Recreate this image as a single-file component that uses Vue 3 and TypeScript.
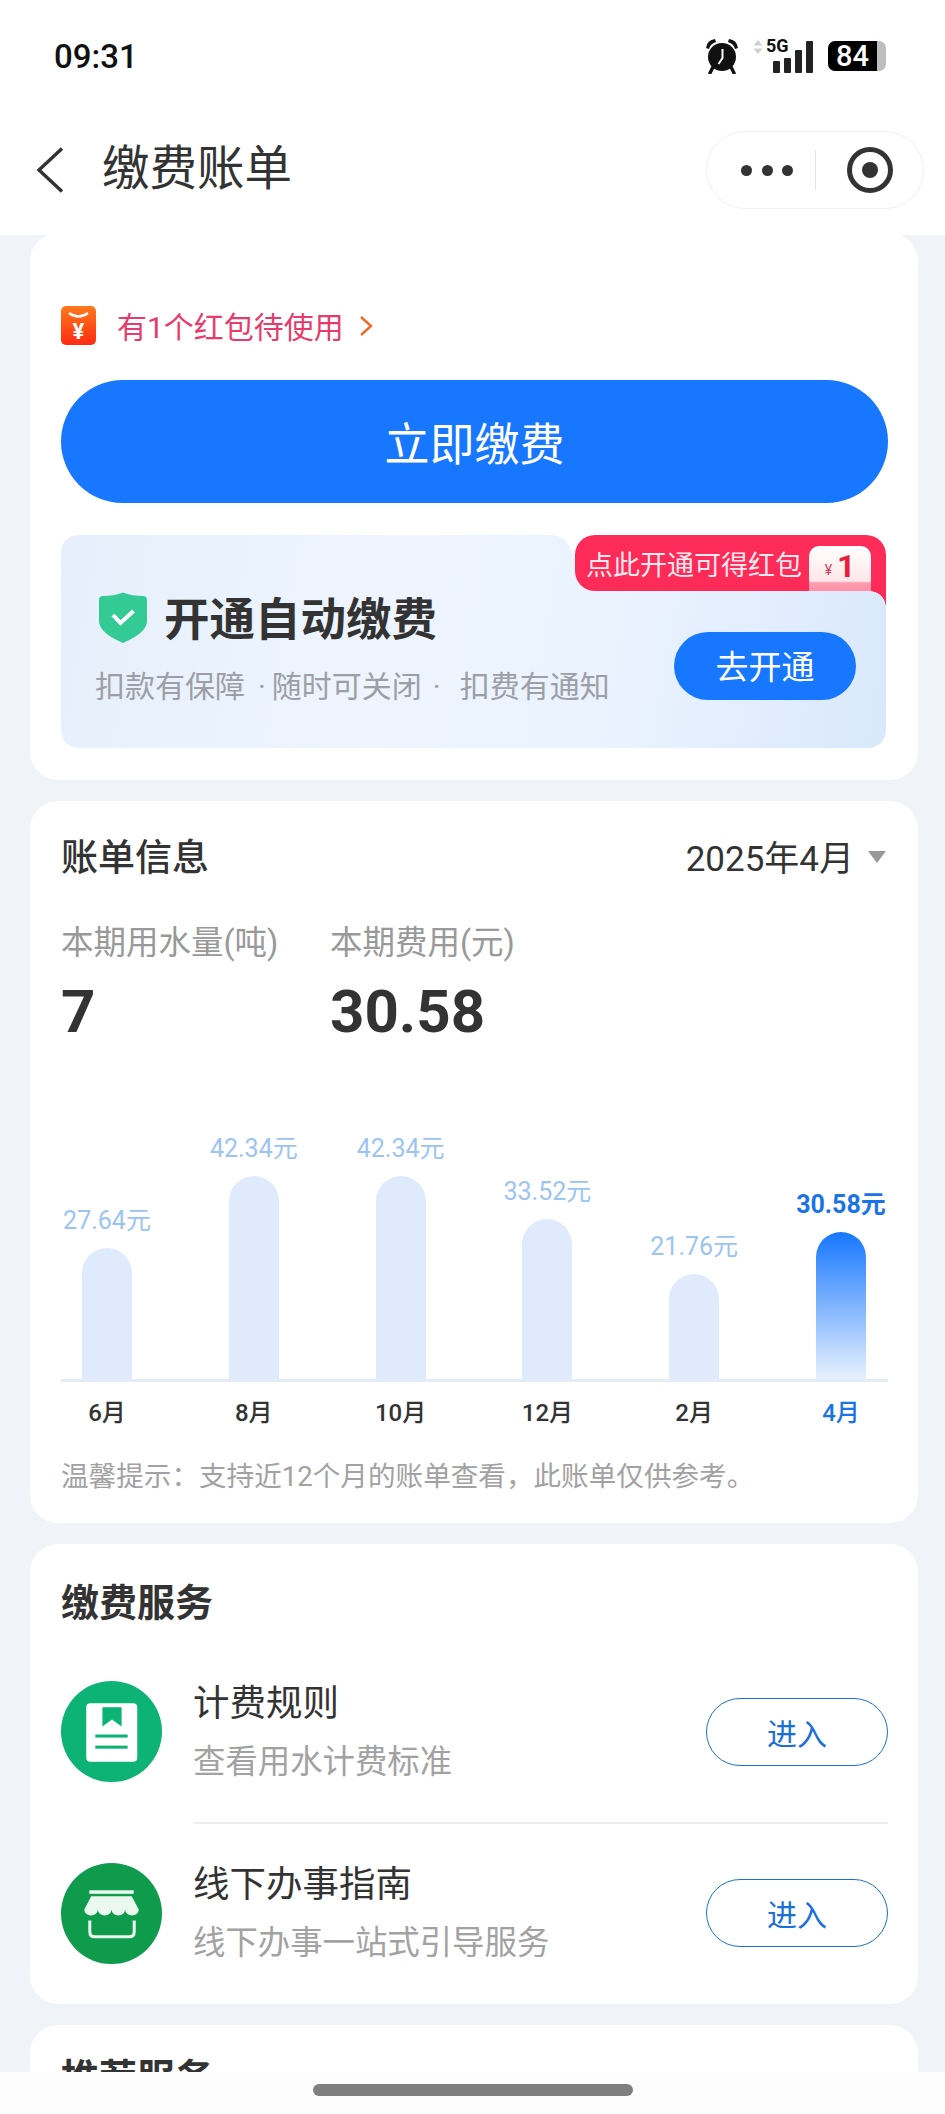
<template>
  <div class="page">
    <header class="top">
      <div class="status">
        <span class="time">09:31</span>
        <div class="status-right">
          <svg class="alarm" width="34" height="36" viewBox="0 0 34 36">
            <path d="M1 10 Q2 2 10 1 L11 4 Q5 6 4 11Z M33 10 Q32 2 24 1 L23 4 Q29 6 30 11Z" fill="#111" />
            <path d="M8 29 L5 35 M26 29 L29 35" stroke="#111" stroke-width="3.4" stroke-linecap="round" />
            <circle cx="17" cy="19" r="14" fill="#111" />
            <path d="M17.5 11 V20 L13.5 26" stroke="#fff" stroke-width="2" fill="none" />
          </svg>
          <div class="signal">
            <svg class="arrows" width="10" height="14" viewBox="0 0 10 14">
              <path d="M5 0 L9.5 5.5 H0.5Z M5 14 L9.5 8.5 H0.5Z" fill="#cfcfcf" />
            </svg>
            <span class="five-g">5G</span>
            <div class="bars">
              <i style="height: 12px"></i>
              <i style="height: 15px"></i>
              <i style="height: 23px"></i>
              <i style="height: 32px"></i>
            </div>
          </div>
          <div class="battery"><span>84</span></div>
        </div>
      </div>
      <div class="nav">
        <svg class="back" width="28" height="46" viewBox="0 0 28 46">
          <path d="M26 1.5 L3 23 L26 44.5" fill="none" stroke="#333" stroke-width="3.4" />
        </svg>
        <h1 class="nav-title">缴费账单</h1>
        <div class="capsule">
          <span class="dots"><i></i><i></i><i></i></span>
          <span class="capsule-line"></span>
          <svg width="48" height="48" viewBox="0 0 48 48">
            <circle cx="24" cy="24" r="20.5" fill="none" stroke="#333" stroke-width="5" />
            <circle cx="24" cy="24" r="8" fill="#333" />
          </svg>
        </div>
      </div>
    </header>

    <main class="content">
      <section class="card pay-card">
        <div class="promo">
          <svg width="35" height="39" viewBox="0 0 35 39">
            <defs>
              <linearGradient id="packet" x1="0" y1="0" x2="0" y2="1">
                <stop offset="0" stop-color="#ff7a1c" />
                <stop offset="1" stop-color="#ff2a12" />
              </linearGradient>
            </defs>
            <rect width="35" height="39" rx="5" fill="url(#packet)" />
            <path d="M8 7 Q17.5 14 27 7" fill="none" stroke="#fff" stroke-width="2.4" />
            <text x="17.5" y="33" text-anchor="middle" font-size="22" font-weight="700" fill="#fff">¥</text>
          </svg>
          <span class="promo-text">有1个红包待使用</span>
          <svg class="promo-arrow" width="14" height="22" viewBox="0 0 14 22">
            <path d="M2 2 L12 11 L2 20" fill="none" stroke="#ee6a2a" stroke-width="2.4" />
          </svg>
        </div>
        <button class="pay-btn">立即缴费</button>
        <div class="auto-wrap">
          <div class="auto-box">
            <div class="auto-left">
              <div class="auto-title">
                <svg width="48" height="51" viewBox="0 0 48 51">
                  <path d="M24 0.5 C30 3 37 4 44 4 Q48 4 48 8 V29 C48 39 35 46 24 51 C13 46 0 39 0 29 V8 Q0 4 4 4 C11 4 18 3 24 0.5Z" fill="#33ca96" />
                  <path d="M14 23 L21.5 31 L34.5 19" fill="none" stroke="#fff" stroke-width="4" />
                </svg>
                <span>开通自动缴费</span>
              </div>
              <p class="auto-sub">扣款有保障<span class="sep-a">·</span>随时可关闭<span class="sep-b">·</span>扣费有通知</p>
            </div>
            <button class="auto-btn">去开通</button>
          </div>
          <div class="auto-tag">
            <span class="tag-text">点此开通可得红包</span>
            <span class="coin"><small>¥</small><b>1</b></span>
          </div>
        </div>
      </section>

      <section class="card bill-card">
        <div class="card-head">
          <h2 class="bill-title">账单信息</h2>
          <div class="month-picker">
            <span>2025年4月</span>
            <i class="caret"></i>
          </div>
        </div>
        <div class="stats">
          <div class="stat water">
            <div class="stat-label">本期用水量(吨)</div>
            <div class="stat-value">7</div>
          </div>
          <div class="stat">
            <div class="stat-label">本期费用(元)</div>
            <div class="stat-value">30.58</div>
          </div>
        </div>
        <div class="chart">
          <div v-for="b in bills" :key="b.month" class="col" :class="{ current: b.current }">
            <span class="amount">{{ b.amount }}元</span>
            <div class="bar" :style="{ height: b.height + 'px' }"></div>
          </div>
        </div>
        <div class="months">
          <span v-for="b in bills" :key="b.month" class="month" :class="{ current: b.current }">{{ b.month }}</span>
        </div>
        <p class="hint">温馨提示：支持近12个月的账单查看，此账单仅供参考。</p>
      </section>

      <section class="card service-card">
        <h2 class="section-title">缴费服务</h2>
        <div class="service">
          <svg class="service-icon" width="101" height="101" viewBox="0 0 100 100">
            <circle cx="50" cy="50" r="50" fill="#0db374" />
            <rect x="25" y="22" width="50.5" height="58" rx="4" fill="#fff" />
            <path d="M41 26 H60 V45 L50.5 38 L41 45Z" fill="#0db374" />
            <rect x="34" y="53" width="32" height="3" fill="#0db374" />
            <rect x="34" y="64" width="32" height="3" fill="#0db374" />
          </svg>
          <div class="service-body line">
            <div class="service-text">
              <div class="service-name">计费规则</div>
              <div class="service-desc">查看用水计费标准</div>
            </div>
            <button class="enter-btn">进入</button>
          </div>
        </div>
        <div class="service">
          <svg class="service-icon" width="101" height="101" viewBox="0 0 100 100">
            <circle cx="50" cy="50" r="50" fill="#0f9b4c" />
            <rect x="28" y="27" width="44" height="3.5" fill="#eaf8ef" />
            <path d="M30 33 H70 L77 46 A6.75 6 0 0 1 63.5 46 A6.75 6 0 0 1 50 46 A6.75 6 0 0 1 36.5 46 A6.75 6 0 0 1 23 46Z" fill="#eaf8ef" />
            <path d="M28.5 57 V68 Q28.5 73 33.5 73 H67.5 Q72.5 73 72.5 68 V57" fill="none" stroke="#eaf8ef" stroke-width="3" />
          </svg>
          <div class="service-body">
            <div class="service-text">
              <div class="service-name">线下办事指南</div>
              <div class="service-desc">线下办事一站式引导服务</div>
            </div>
            <button class="enter-btn">进入</button>
          </div>
        </div>
      </section>

      <section class="card more-card">
        <h2 class="section-title">推荐服务</h2>
      </section>
    </main>

    <div class="home-bar"><i></i></div>
  </div>
</template>

<script setup lang="ts">
interface Bill {
  month: string
  amount: string
  height: number
  current?: boolean
}

const bills: Bill[] = [
  { month: '6月', amount: '27.64', height: 131 },
  { month: '8月', amount: '42.34', height: 203 },
  { month: '10月', amount: '42.34', height: 203 },
  { month: '12月', amount: '33.52', height: 160 },
  { month: '2月', amount: '21.76', height: 105 },
  { month: '4月', amount: '30.58', height: 147, current: true }
]
</script>

<style>
html,
body {
  margin: 0;
  background: #f0f3f8;
}
</style>

<style scoped>
.page {
  position: relative;
  width: 945px;
  height: 2114px;
  overflow: hidden;
  background: #f0f3f8;
  color: #333;
  font-family: Roboto, "Noto Sans CJK SC", sans-serif;
}

button {
  border: none;
  padding: 0;
  font-family: inherit;
}

h1,
h2,
p {
  margin: 0;
  font-weight: 400;
}

.top {
  position: relative;
  z-index: 2;
  height: 235px;
  background: #fff;
}

.status {
  display: flex;
  justify-content: space-between;
  align-items: center;
  height: 112px;
  padding: 0 59px 0 54px;
  box-sizing: border-box;
}

.time {
  font-size: 33px;
  font-weight: 500;
  color: #111;
}

.status-right {
  display: flex;
  align-items: center;
}

.signal {
  position: relative;
  width: 60px;
  height: 34px;
  margin-left: 14px;
}

.arrows {
  position: absolute;
  left: 0;
  top: 1px;
}

.five-g {
  position: absolute;
  left: 13px;
  top: -3px;
  font-size: 18px;
  line-height: 20px;
  font-weight: 700;
  color: #111;
}

.bars {
  position: absolute;
  right: 0;
  bottom: 0;
  display: flex;
  align-items: flex-end;
  gap: 4px;
}

.bars i {
  display: block;
  width: 7px;
  border-radius: 1px;
  background: #222;
}

.battery {
  display: flex;
  align-items: center;
  justify-content: center;
  width: 58px;
  height: 30px;
  margin-left: 15px;
  padding-right: 9px;
  box-sizing: border-box;
  border-radius: 7px;
  background: linear-gradient(to right, #000 85%, #bdbdbd 85%);
  color: #fff;
  font-size: 29px;
  font-weight: 500;
}

.nav {
  display: flex;
  align-items: center;
  height: 78px;
  margin-top: 19px;
  padding: 0 21px 0 36px;
}

.nav-title {
  margin-left: 38px;
  margin-bottom: 2px;
  font-size: 47.5px;
  line-height: 60px;
  color: #333;
}

.capsule {
  display: flex;
  align-items: center;
  width: 218px;
  height: 78px;
  margin-left: auto;
  box-sizing: border-box;
  padding-left: 34px;
  border: 1px solid #f0f0f0;
  border-radius: 39px;
}

.dots {
  display: flex;
  gap: 9.5px;
}

.dots i {
  display: block;
  width: 11px;
  height: 11px;
  border-radius: 50%;
  background: #333;
}

.capsule-line {
  width: 1px;
  height: 40px;
  margin: 0 30px 0 22px;
  background: #e4e4e4;
}

.content {
  display: flex;
  flex-direction: column;
  gap: 21px;
  margin-top: -2px;
  padding: 0 27px 0 30px;
}

.card {
  background: #fff;
  border-radius: 28px;
  padding: 0 30px 0 31px;
}

.pay-card {
  padding-top: 73px;
  padding-bottom: 32px;
}

.promo {
  display: flex;
  align-items: center;
  height: 39px;
}

.promo-text {
  margin-left: 21px;
  margin-bottom: 2px;
  font-size: 30px;
  color: #e73b6b;
}

.promo-arrow {
  margin-left: 15px;
}

.pay-btn {
  display: block;
  width: 100%;
  height: 123px;
  margin-top: 35px;
  border-radius: 62px;
  background: #1778ff;
  color: #fff;
  font-size: 45px;
}

.auto-wrap {
  position: relative;
  width: 825px;
  height: 213px;
  margin-top: 32px;
}

.auto-box {
  display: flex;
  justify-content: space-between;
  height: 100%;
  box-sizing: border-box;
  padding: 57px 30px 0 34px;
  background: linear-gradient(100deg, #e6effb 0%, #eef5ff 40%, #e9f2fe 70%, #d9e8fc 100%);
  clip-path: path("M20 0 H488 Q506 0 511 18 L520 40 L530 56 H825 V193 Q825 213 805 213 H20 Q0 213 0 193 V20 Q0 0 20 0Z");
}

.auto-title {
  display: flex;
  align-items: center;
  gap: 17px;
  margin-left: 4px;
  height: 51px;
  font-size: 45.5px;
  font-weight: 700;
  color: #333;
}

.auto-title span {
  margin-bottom: 3px;
}

.auto-sub {
  margin-top: 24px;
  font-size: 30px;
  line-height: 40px;
  white-space: nowrap;
  color: #9c9fa5;
}

.sep-a {
  margin: 0 6px 0 13px;
}

.sep-b {
  margin: 0 19px 0 11px;
}

.auto-btn {
  width: 182px;
  height: 68px;
  margin-top: 40px;
  padding-bottom: 3px;
  border-radius: 34px;
  background: #1778ff;
  color: #fff;
  font-size: 33px;
}

.auto-tag {
  position: absolute;
  top: 0;
  right: 0;
  display: flex;
  align-items: flex-end;
  width: 311px;
  height: 56px;
  box-sizing: border-box;
  padding-left: 11px;
  border-radius: 20px 20px 0 20px;
  background: #fd2b58;
}

.auto-tag::after {
  content: "";
  position: absolute;
  top: 100%;
  right: 0;
  width: 16px;
  height: 16px;
  background: radial-gradient(circle at 0 100%, transparent 15.5px, #fd2b58 16px);
}

.tag-text {
  align-self: center;
  font-size: 27px;
  color: #ffe9ee;
}

.coin {
  display: flex;
  align-items: center;
  justify-content: center;
  gap: 5px;
  width: 62px;
  height: 45px;
  margin-left: 7px;
  box-sizing: border-box;
  padding-bottom: 6px;
  border-radius: 10px 10px 0 0;
  background: linear-gradient(#fff 0%, #ffe6e9 78%, #ff9cb0 82%, #ff8fa6 100%);
  color: #e5213d;
}

.coin small {
  margin-top: 8px;
  font-size: 14px;
  color: #c9435a;
}

.coin b {
  font-size: 32px;
  line-height: 36px;
  font-weight: 700;
}

.bill-card {
  padding-top: 29px;
  padding-bottom: 26px;
}

.card-head {
  display: flex;
  justify-content: space-between;
  align-items: center;
  height: 50px;
}

.bill-title {
  font-size: 37px;
  font-weight: 500;
}

.month-picker {
  display: flex;
  align-items: center;
  gap: 14px;
  font-size: 35px;
}

.caret {
  width: 0;
  height: 0;
  margin-top: 4px;
  margin-right: 2px;
  border-left: 9.5px solid transparent;
  border-right: 9.5px solid transparent;
  border-top: 12px solid #999;
}

.stats {
  display: flex;
  margin-top: 43px;
}

.water {
  width: 269px;
}

.stat-label {
  font-size: 32.5px;
  line-height: 40px;
  color: #999;
}

.stat-value {
  margin-top: 14px;
  font-size: 60px;
  line-height: 70px;
  font-weight: 700;
}

.chart {
  display: flex;
  justify-content: space-between;
  align-items: flex-end;
  margin-top: 85px;
  padding-right: 1px;
  border-bottom: 3px solid #e4ecf8;
}

.col {
  display: flex;
  flex-direction: column;
  align-items: center;
  gap: 10px;
  width: 92px;
}

.amount {
  font-size: 25px;
  line-height: 34px;
  white-space: nowrap;
  color: #9cc4f3;
}

.bar {
  width: 50px;
  border-radius: 25px 25px 0 0;
  background: #dfebfd;
}

.col.current .amount {
  font-weight: 700;
  color: #1a74e8;
}

.col.current .bar {
  background: linear-gradient(#1677ff, #e8f1fe);
}

.months {
  display: flex;
  justify-content: space-between;
  margin-top: 14px;
  padding-right: 1px;
}

.month {
  width: 92px;
  font-size: 24px;
  line-height: 34px;
  font-weight: 500;
  text-align: center;
  color: #333;
}

.month.current {
  color: #1a74e8;
}

.hint {
  margin-top: 27px;
  font-size: 27.6px;
  line-height: 40px;
  white-space: nowrap;
  color: #a2a2a2;
}

.service-card {
  padding-top: 34px;
}

.section-title {
  height: 50px;
  margin-bottom: 13px;
  font-size: 38px;
  line-height: 50px;
  font-weight: 700;
  color: #333;
}

.service {
  display: flex;
}

.service-icon {
  flex: none;
  margin-top: 40px;
}

.service + .service .service-icon {
  margin-top: 39px;
}

.service-body {
  flex: 1;
  display: flex;
  justify-content: space-between;
  align-items: center;
  margin-left: 31px;
  padding: 41px 0 40px;
}

.service + .service .service-body {
  padding: 39px 0 41px;
}

.service-body.line {
  border-bottom: 2px solid #eeeeee;
}

.service-name {
  font-size: 36.5px;
  line-height: 44px;
  color: #333;
}

.service-desc {
  margin-top: 16px;
  font-size: 32.4px;
  line-height: 40px;
  color: #a2a2a2;
}

.enter-btn {
  width: 182px;
  height: 68px;
  box-sizing: border-box;
  border: 1.5px solid #1a6fd8;
  border-radius: 34px;
  background: #fff;
  color: #1a6fd8;
  font-size: 30px;
}

.more-card {
  height: 200px;
  padding-top: 28px;
}

.home-bar {
  position: absolute;
  left: 0;
  right: 0;
  bottom: 0;
  z-index: 3;
  display: flex;
  justify-content: center;
  height: 42px;
  background: #fdfdfd;
}

.home-bar i {
  display: block;
  width: 320px;
  height: 12px;
  margin-top: 12px;
  border-radius: 6px;
  background: #7f7f7f;
}
</style>
